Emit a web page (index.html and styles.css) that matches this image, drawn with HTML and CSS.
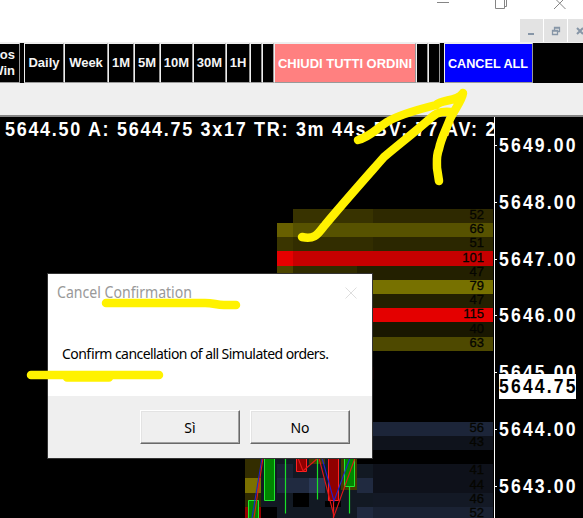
FILE: index.html
```html
<!DOCTYPE html>
<html lang="it">
<head>
<meta charset="utf-8">
<title>Chart</title>
<link rel="stylesheet" href="styles.css">
</head>
<body>
<main class="app">
  <header class="titlebar">
    <svg class="window-controls" width="173" height="19" viewBox="410 0 173 19" fill="none" stroke="#858585">
      <path d="M437 2.5H449M495.5 0V8.5H504.5V0M504.5 6.5H506.5V0M554 9L565.5-2.5M554-2.5L565.5 9"/>
    </svg>
    <div class="mdi-controls">
      <span class="mdi"><svg width="23" height="23" fill="none" stroke="#8796a7" stroke-width="2"><path d="M8 15H14"/></svg></span>
      <span class="mdi"><svg width="23" height="23" fill="none" stroke="#8796a7" stroke-width="1.3"><path d="M8.5 11.500H13.500V15.500H8.500ZM8 12H14M10.500 11V8.500H15.500V12.500H14M10 9H16"/></svg></span>
      <span class="mdi"><svg width="23" height="23" fill="none" stroke="#8796a7" stroke-width="2"><path d="M9 9L15 15M15 9L9 15"/></svg></span>
    </div>
  </header>
  <nav class="toolbar">
    <button class="tool first"><span>Pos<br>Win</span></button>
    <i class="gap"></i>
    <button class="tool daily">Daily</button>
    <button class="tool week">Week</button>
    <button class="tool minute">1M</button>
    <button class="tool minute">5M</button>
    <button class="tool tens">10M</button>
    <button class="tool tens">30M</button>
    <button class="tool hour">1H</button>
    <button class="tool blank"></button>
    <button class="tool blank"></button>
    <button class="tool close-all"><svg width="140" height="38"><text x="3" y="24" textLength="134" lengthAdjust="spacingAndGlyphs">CHIUDI TUTTI ORDINI</text></svg></button>
    <button class="tool blank"></button>
    <button class="tool blank"></button>
    <i class="gap"></i>
    <button class="tool cancel-all"><svg width="87" height="38"><text x="3" y="24" textLength="80" lengthAdjust="spacingAndGlyphs">CANCEL ALL</text></svg></button>
  </nav>
  <div class="strip"></div>
  <svg class="chart" width="583" height="401" viewBox="0 117 583 401">
    <g class="cells">
      <path fill="#383300" d="M293 209H373V223H293Z"/><path fill="#2e2900" d="M373 209H493V223H373Z"/>
      <path fill="#686000" d="M277 223H293V237H277Z"/><path fill="#575200" d="M293 223H493V237H293Z"/>
      <path fill="#3a3500" d="M277 237H293V251H277Z"/><path fill="#322d00" d="M293 237H373V251H293Z"/><path fill="#2b2700" d="M373 237H493V251H373Z"/>
      <path fill="#e60000" d="M277 251H293V266H277Z"/><path fill="#c60000" d="M293 251H493V266H293Z"/>
      <path fill="#4c4600" d="M277 266H293V280H277Z"/><path fill="#302c00" d="M293 266H357V280H293Z"/><path fill="#232000" d="M357 266H493V280H357Z"/>
      <path fill="#777100" d="M357 280H493V294H357Z"/>
      <path fill="#232000" d="M357 294H493V308H357Z"/>
      <path fill="#e40000" d="M357 308H493V322H357Z"/>
      <path fill="#191700" d="M357 322H493V337H357Z"/>
      <path fill="#4e4900" d="M357 337H493V351H357Z"/>
      <path fill="#1c2539" d="M357 422H493V436H357Z"/>
      <path fill="#0f131c" d="M357 436H493V450H357Z"/>
      <path fill="#0e111a" d="M373 464H493V493H373Z"/>
      <path fill="#131925" d="M373 493H493V507H373Z"/>
      <path fill="#1a2233" d="M373 507H493V518H373Z"/>
      <path fill="#332d00" d="M245 458H265V478H245Z"/><path fill="#7b7000" d="M245 478H261V493H245Z"/><path fill="#302b00" d="M245 493H261V507H245Z"/><path fill="#980000" d="M245 507H248V518H245ZM259 507H261V518H259Z"/><path fill="#544d00" d="M248 507H259V518H248Z"/>
      <path fill="#121923" d="M261 458H373V518H261Z"/>
      <path fill="#1a2335" d="M277 464H293V478H277Z"/>
      <path fill="#202a40" d="M277 478H309V493H277ZM357 478H373V493H357ZM357 507H373V518H357Z"/>
      <path fill="#2a3856" d="M309 478H325V493H309Z"/>
      <path fill="#000" d="M261 507H277V518H261ZM293 493H309V507H293ZM325 501H341V507H325ZM357 458H373V464H357Z"/>
      <path fill="#433c00" d="M309 458H325V464H309ZM341 458H357V490H341Z"/>
    </g>
    <g class="candles">
      <path class="up" d="M248.500 500.500H258.500V520H248.500ZM264.500 450V500.500H274.500V450ZM344.500 450V486.500H354.500V450Z"/>
      <path class="wick" d="M285.500 458V513.500M317.500 458V499.500M349.500 486V513.500"/>
      <path class="down" d="M296.500 450V471.500H306.500V450ZM328.500 450V500.500H338.500V450Z"/>
      <path class="wick red" d="M333.500 500V518"/>
      <path class="line blue" d="M252 518L262 458M322 458L334 501L350 458"/>
      <path class="line red" d="M254 518L263 458M298 458L303 471L318 458M319 458L334 516L355 458"/>
      <path class="line red" d="M372.500 367V379"/>
    </g>
    <path class="axis" d="M494.500 117V518M494 145.500H497M494 202.500H497M494 259.500H497M494 315.500H497M494 372.500H497M494 429.500H497M494 486.500H497"/>
    <g class="volumes">
      <text x="484" y="219">52</text><text x="484" y="233">66</text><text x="484" y="247">51</text><text x="484" y="262">101</text><text x="484" y="276">47</text><text x="484" y="290">79</text><text x="484" y="304">47</text><text x="484" y="318">115</text><text x="484" y="333">40</text><text x="484" y="347">63</text><text x="484" y="432">56</text><text x="484" y="446">43</text><text x="484" y="474">41</text><text x="484" y="489">44</text><text x="484" y="503">46</text><text x="484" y="517">52</text>
    </g>
    <g class="prices" transform="translate(499 0) scale(.88 1)">
      <text y="152" textLength="87">5649.00</text><text y="209" textLength="87">5648.00</text><text y="266" textLength="87">5647.00</text><text y="322" textLength="87">5646.00</text><text y="379" textLength="87">5645.00</text><text y="436" textLength="87">5644.00</text><text y="493" textLength="87">5643.00</text>
      <path fill="#fff" d="M0 374H87.500V399H0Z"/>
      <text class="current" y="393" textLength="87">5644.75</text>
    </g>
    <svg x="0" y="117" width="494" height="30"><text class="quote" transform="translate(5 19) scale(.9 1)" textLength="545">5644.50 A: 5644.75 3x17 TR: 3m 44s BV: 77 AV: 2</text></svg>
  </svg>
  <section class="dialog">
    <div class="dialog-head"><svg width="140" height="24"><text x="0" y="17" textLength="135" lengthAdjust="spacingAndGlyphs">Cancel Confirmation</text></svg><svg width="12" height="12" stroke="#dedede"><path d="M.5.5L11.500 11.500M11.500.5L.5 11.500"/></svg></div>
    <p class="message"><svg width="280" height="22"><text x="0" y="16" textLength="267">Confirm cancellation of all Simulated orders.</text></svg></p>
    <footer class="actions"><button>Sì</button><button>No</button></footer>
  </section>
  <svg class="marks" width="583" height="518">
    <path d="M358 140C370 137 376 129 387 122C400 114 420 109 436 105C442 99 457 102 463 93C462 101 454 110 450 119C446 130 441 138 439 149C436 156 437 162 437 168L439 181M302 237C316 240 318 233 325 225C345 201 362 182 384 157C402 142 416 131 432 117C440 110 448 112 453 112"/>
    <path d="M106 303H205C214 303 216 305 224 305H236M31 375H159M67 377.500H109"/>
  </svg>
</main>
</body>
</html>
```
FILE: styles.css
```css
* { box-sizing: border-box; }
body { margin: 0; background: #fff; overflow: hidden; font-family: "Liberation Sans", Arial, sans-serif; }
.app { position: relative; width: 583px; height: 518px; overflow: hidden; display: flex; flex-direction: column; }
.titlebar { height: 42px; display: flex; flex-direction: column; align-items: flex-end; flex: none; }
.window-controls { display: block; flex: none; }
.mdi-controls { display: flex; gap: 1px; width: 63px; overflow: hidden; }
.mdi { width: 23px; height: 23px; background: #e3e3e3; flex: none; }
.mdi svg { display: block; }
.toolbar { height: 41px; flex: none; display: flex; background: #000; border-top: 1px solid #eee; }
.tool { height: 40px; flex: none; padding: 0; background: #000; color: #f4f4f4; border: 1px solid; border-color: #eee #999 #999 #eee; font: bold 13px/16px "Liberation Sans", Arial, sans-serif; white-space: nowrap; display: flex; align-items: center; justify-content: center; overflow: hidden; }
.tool svg { display: block; flex: none; fill: #fff; font-size: 13.5px; }
.first { width: 20px; justify-content: flex-end; padding-right: 4px; border-left: 0; text-align: right; }
.gap { width: 4px; flex: none; }
.daily { width: 40px; }
.week { width: 44px; }
.minute { width: 26px; }
.tens { width: 33px; }
.hour { width: 24px; }
.blank { width: 12px; }
.close-all { width: 142px; background: #ff8080; }
.cancel-all { width: 89px; background: #00f; }
.strip { height: 34px; flex: none; background: #efefef; border-bottom: 2px solid #858585; }
.chart { display: block; flex: none; background: #000; }
.cells { shape-rendering: crispEdges; }
.axis { stroke: #fff; fill: none; shape-rendering: crispEdges; }
.up { fill: #008500; stroke: #20e830; }
.down { fill: #900000; stroke: #ff2020; }
.wick { fill: none; stroke: #18e028; stroke-width: 1.2; }
.wick.red { stroke: #f21818; }
.line { fill: none; stroke-width: 1.1; }
.line.red { stroke: #e01818; }
.line.blue { stroke: #2020cc; }
.volumes { font-size: 13px; fill: #050500; stroke: #050500; stroke-width: .3px; text-anchor: end; }
.prices { font-size: 20px; font-weight: bold; fill: #fff; }
.prices .current { fill: #000; }
.quote { font-size: 20px; font-weight: bold; fill: #fff; }
.dialog { position: absolute; left: 47px; top: 273px; width: 326px; height: 186px; background: #fff; border: 1px solid #333; display: flex; flex-direction: column; }
.dialog-head { height: 38px; padding: 0 15px 0 9px; display: flex; justify-content: space-between; align-items: center; fill: #999; font: 15.5px "Noto Sans", sans-serif; }
.message { margin: 31px 0 0 14px; height: 53px; font: 14px "Noto Sans", sans-serif; }
.message svg { display: block; }
.actions { flex: 1; background: #efefef; display: flex; justify-content: flex-end; gap: 10px; padding: 14px 22px; }
.actions button { width: 100px; height: 34px; padding: 0; background: #efefef; border: 1px solid; border-color: #fff #696969 #696969 #fff; box-shadow: inset -1px -1px #a0a0a0, inset 1px 1px #e3e3e3; font: 14px "Noto Sans", sans-serif; color: #000; }
.marks { position: absolute; left: 0; top: 0; fill: none; stroke: #fff200; stroke-width: 8.5; stroke-linecap: round; stroke-linejoin: round; pointer-events: none; }
```
